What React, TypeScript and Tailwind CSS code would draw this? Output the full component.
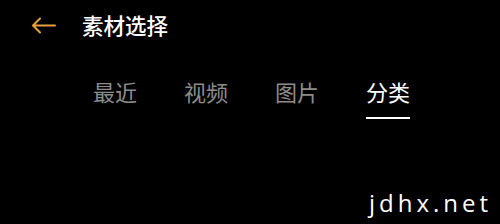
import React from 'react';

const tabs = ['最近', '视频', '图片', '分类'];

const App: React.FC = () => {
  const active = 3;

  return (
    <div className="w-[500px] h-[224px] bg-black overflow-hidden font-['Noto_Sans_CJK_SC',sans-serif] flex flex-col">
      <div className="flex items-center h-[50px] pl-[31px]">
        <svg width="25" height="17" viewBox="0 0 25 17" fill="none" className="shrink-0">
          <path d="M9 1.5 L2 8.5 L9 15.5 M2 8.5 H24" stroke="#e6a23c" strokeWidth="2" strokeLinecap="round" strokeLinejoin="round" />
        </svg>
        <span className="ml-[26px] text-[21.5px] leading-none font-medium text-white">素材选择</span>
      </div>
      <div className="flex pl-[93px] gap-[47px] mt-[26px]">
        {tabs.map((t, i) => (
          <div key={t} className="flex flex-col items-center">
            <span className={`text-[22px] leading-[30px] ${i === active ? 'text-white' : 'text-[#8c8c8c]'}`}>{t}</span>
            <div className={`mt-[11px] h-[2px] w-[44px] ${i === active ? 'bg-white' : 'bg-transparent'}`} />
          </div>
        ))}
      </div>
      <div className="flex justify-end pr-[8px] mt-auto mb-[9px]">
        <span className="font-['Open_Sans',sans-serif] text-[24px] leading-none tracking-[4px] text-white">jdhx.net</span>
      </div>
    </div>
  );
};

export default App;
